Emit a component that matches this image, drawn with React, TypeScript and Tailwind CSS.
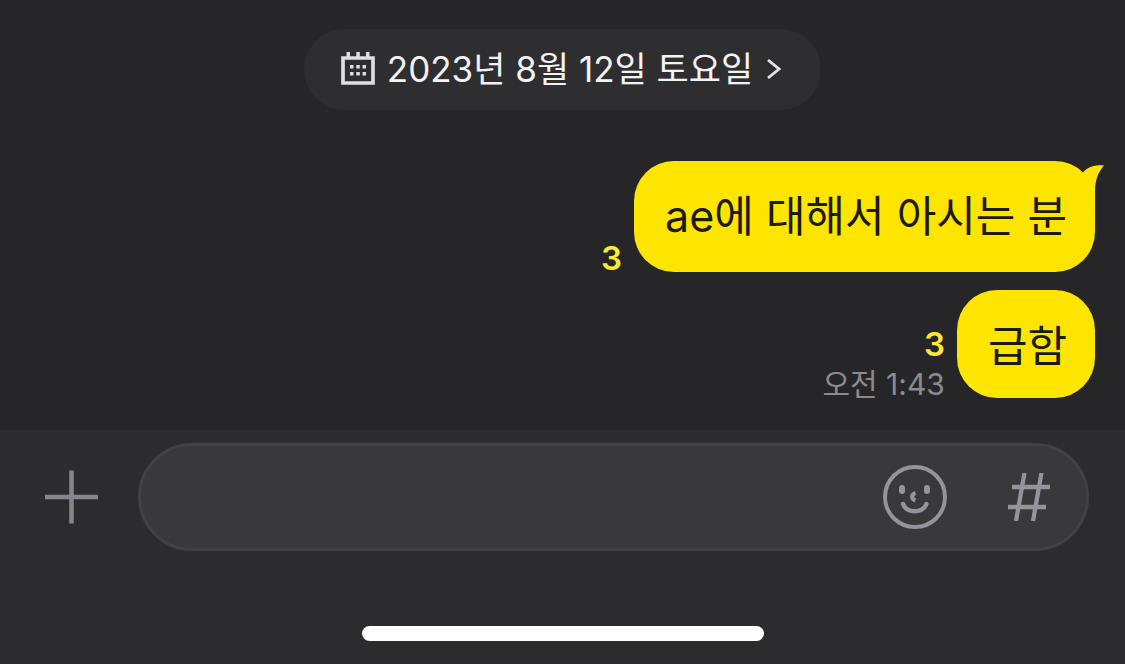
import React from 'react';

interface Message {
  id: number;
  text: string;
  unread: number;
  time?: string;
  first?: boolean;
}

function CalendarIcon() {
  return (
    <svg className="mb-0.5 h-[34px] w-[34px]" viewBox="0 0 34 34" fill="none" aria-hidden="true">
      <path d="M2 6h30v25H2z" stroke="#dededf" strokeWidth="3.700" />
      <path d="M5.500 0H9v5H5.500zM15.300 0h3.500v5h-3.500zM25 0h3.500v5H25z" fill="#dededf" />
      <path
        d="M9 13h3.500v3.500H9zM15.300 13h3.500v3.500h-3.500zM21.500 13H25v3.500h-3.500zM9 20h3.500v3.500H9zM15.300 20h3.500v3.500h-3.500zM21.500 20H25v3.500h-3.500z"
        fill="#dededf"
      />
    </svg>
  );
}

function ArrowIcon() {
  return (
    <svg className="mb-0.5 h-5 w-3.5" viewBox="0 0 14 20" fill="none" aria-hidden="true">
      <path d="M1 1l11 9-11 9" stroke="#e4e4e5" strokeWidth="2.800" />
    </svg>
  );
}

function PlusIcon() {
  return (
    <svg className="h-[54px] w-[54px]" viewBox="0 0 54 54" fill="none" aria-hidden="true">
      <path d="M1 27h53M27.500 0.500v53" stroke="#85868d" strokeWidth="4.500" />
    </svg>
  );
}

function SmileIcon() {
  return (
    <svg className="h-16 w-16" viewBox="0 0 64 64" fill="none" aria-hidden="true">
      <circle cx="32" cy="32" r="30" stroke="#93949c" strokeWidth="4" />
      <rect x="16" y="20" width="6" height="9" rx="3" fill="#93949c" />
      <rect x="41" y="20" width="6" height="9" rx="3" fill="#93949c" />
      <path d="M32.500 28c-4.500 1.500-4.500 6 0 7.500" stroke="#93949c" strokeWidth="4" />
      <path
        d="M20 39c2 5 6.500 7.200 11.700 7.200s9.700-2.200 11.700-7.200"
        stroke="#93949c"
        strokeWidth="4.400"
        strokeLinecap="round"
      />
    </svg>
  );
}

function HashIcon() {
  return (
    <svg className="h-12 w-[42px]" viewBox="0 0 42 48" fill="none" aria-hidden="true">
      <path d="M16.500 0L8 48M33.500 0L25 48M4 14h38M0 34h38" stroke="#93949c" strokeWidth="4.300" />
    </svg>
  );
}

function Bubble({ text, first }: { text: string; first?: boolean }) {
  return (
    <div
      className={`relative rounded-[40px] bg-[#fee500] pr-7 pl-[31px] text-[43px] text-[#1d1a05] ${
        first ? 'leading-[111px]' : 'pt-1 leading-[104px]'
      }`}
    >
      {text}
      {first && (
        <svg className="absolute top-1 -right-[9px] h-9 w-[25px]" viewBox="0 0 25 36" aria-hidden="true">
          <path d="M4 7.500C9 1.500 16 0 25 0.300C19 8 16 15 16 26V36H0z" fill="#fee500" />
        </svg>
      )}
    </div>
  );
}

export default function App() {
  const messages: Message[] = [
    { id: 1, text: 'ae에 대해서 아시는 분', unread: 3, first: true },
    { id: 2, text: '급함', unread: 3, time: '오전 1:43' },
  ];

  return (
    <div className="flex min-h-screen flex-col bg-[#262628] font-['Inter','Noto_Sans_CJK_KR',sans-serif]">
      {/* Chat */}
      <main className="flex flex-1 flex-col pt-[29px] pr-[30px] pb-8 pl-[30px]">
        <button className="flex h-[81px] items-center self-center rounded-full bg-[#2e2e30] pr-10 pl-[37px] text-[35px] text-[#f2f2f3]">
          <CalendarIcon />
          <span className="ml-3">2023년 8월 12일 토요일</span>
          <span className="ml-3.5">
            <ArrowIcon />
          </span>
        </button>

        <div className="mt-[51px] flex flex-col gap-[18px]">
          {messages.map((message) => (
            <div key={message.id} className="flex items-end justify-end gap-3">
              <div className="flex flex-col items-end">
                <span className="text-[33px] leading-[27px] font-semibold text-[#fee833]">{message.unread}</span>
                {message.time && (
                  <span className="mt-3 text-[30px] leading-[28px] text-[#8b8b8d]">{message.time}</span>
                )}
              </div>
              <Bubble text={message.text} first={message.first} />
            </div>
          ))}
        </div>
      </main>

      {/* Input bar */}
      <footer className="bg-[#2c2c2e] pt-[13px] pb-[23px]">
        <div className="flex items-center pr-9 pl-11">
          <button aria-label="첨부">
            <PlusIcon />
          </button>
          <div className="ml-10 flex h-[108px] flex-1 items-center rounded-full border-3 border-[#424244] bg-[#39393b] pr-9 pl-10">
            <input
              type="text"
              aria-label="메시지 입력"
              className="h-full min-w-0 flex-1 bg-transparent text-[42px] text-white outline-none"
            />
            <button aria-label="이모티콘">
              <SmileIcon />
            </button>
            <button aria-label="샵검색" className="ml-[61px]">
              <HashIcon />
            </button>
          </div>
        </div>
        <div className="mx-auto mt-[75px] h-[15px] w-[402px] rounded-full bg-white" />
      </footer>
    </div>
  );
}
